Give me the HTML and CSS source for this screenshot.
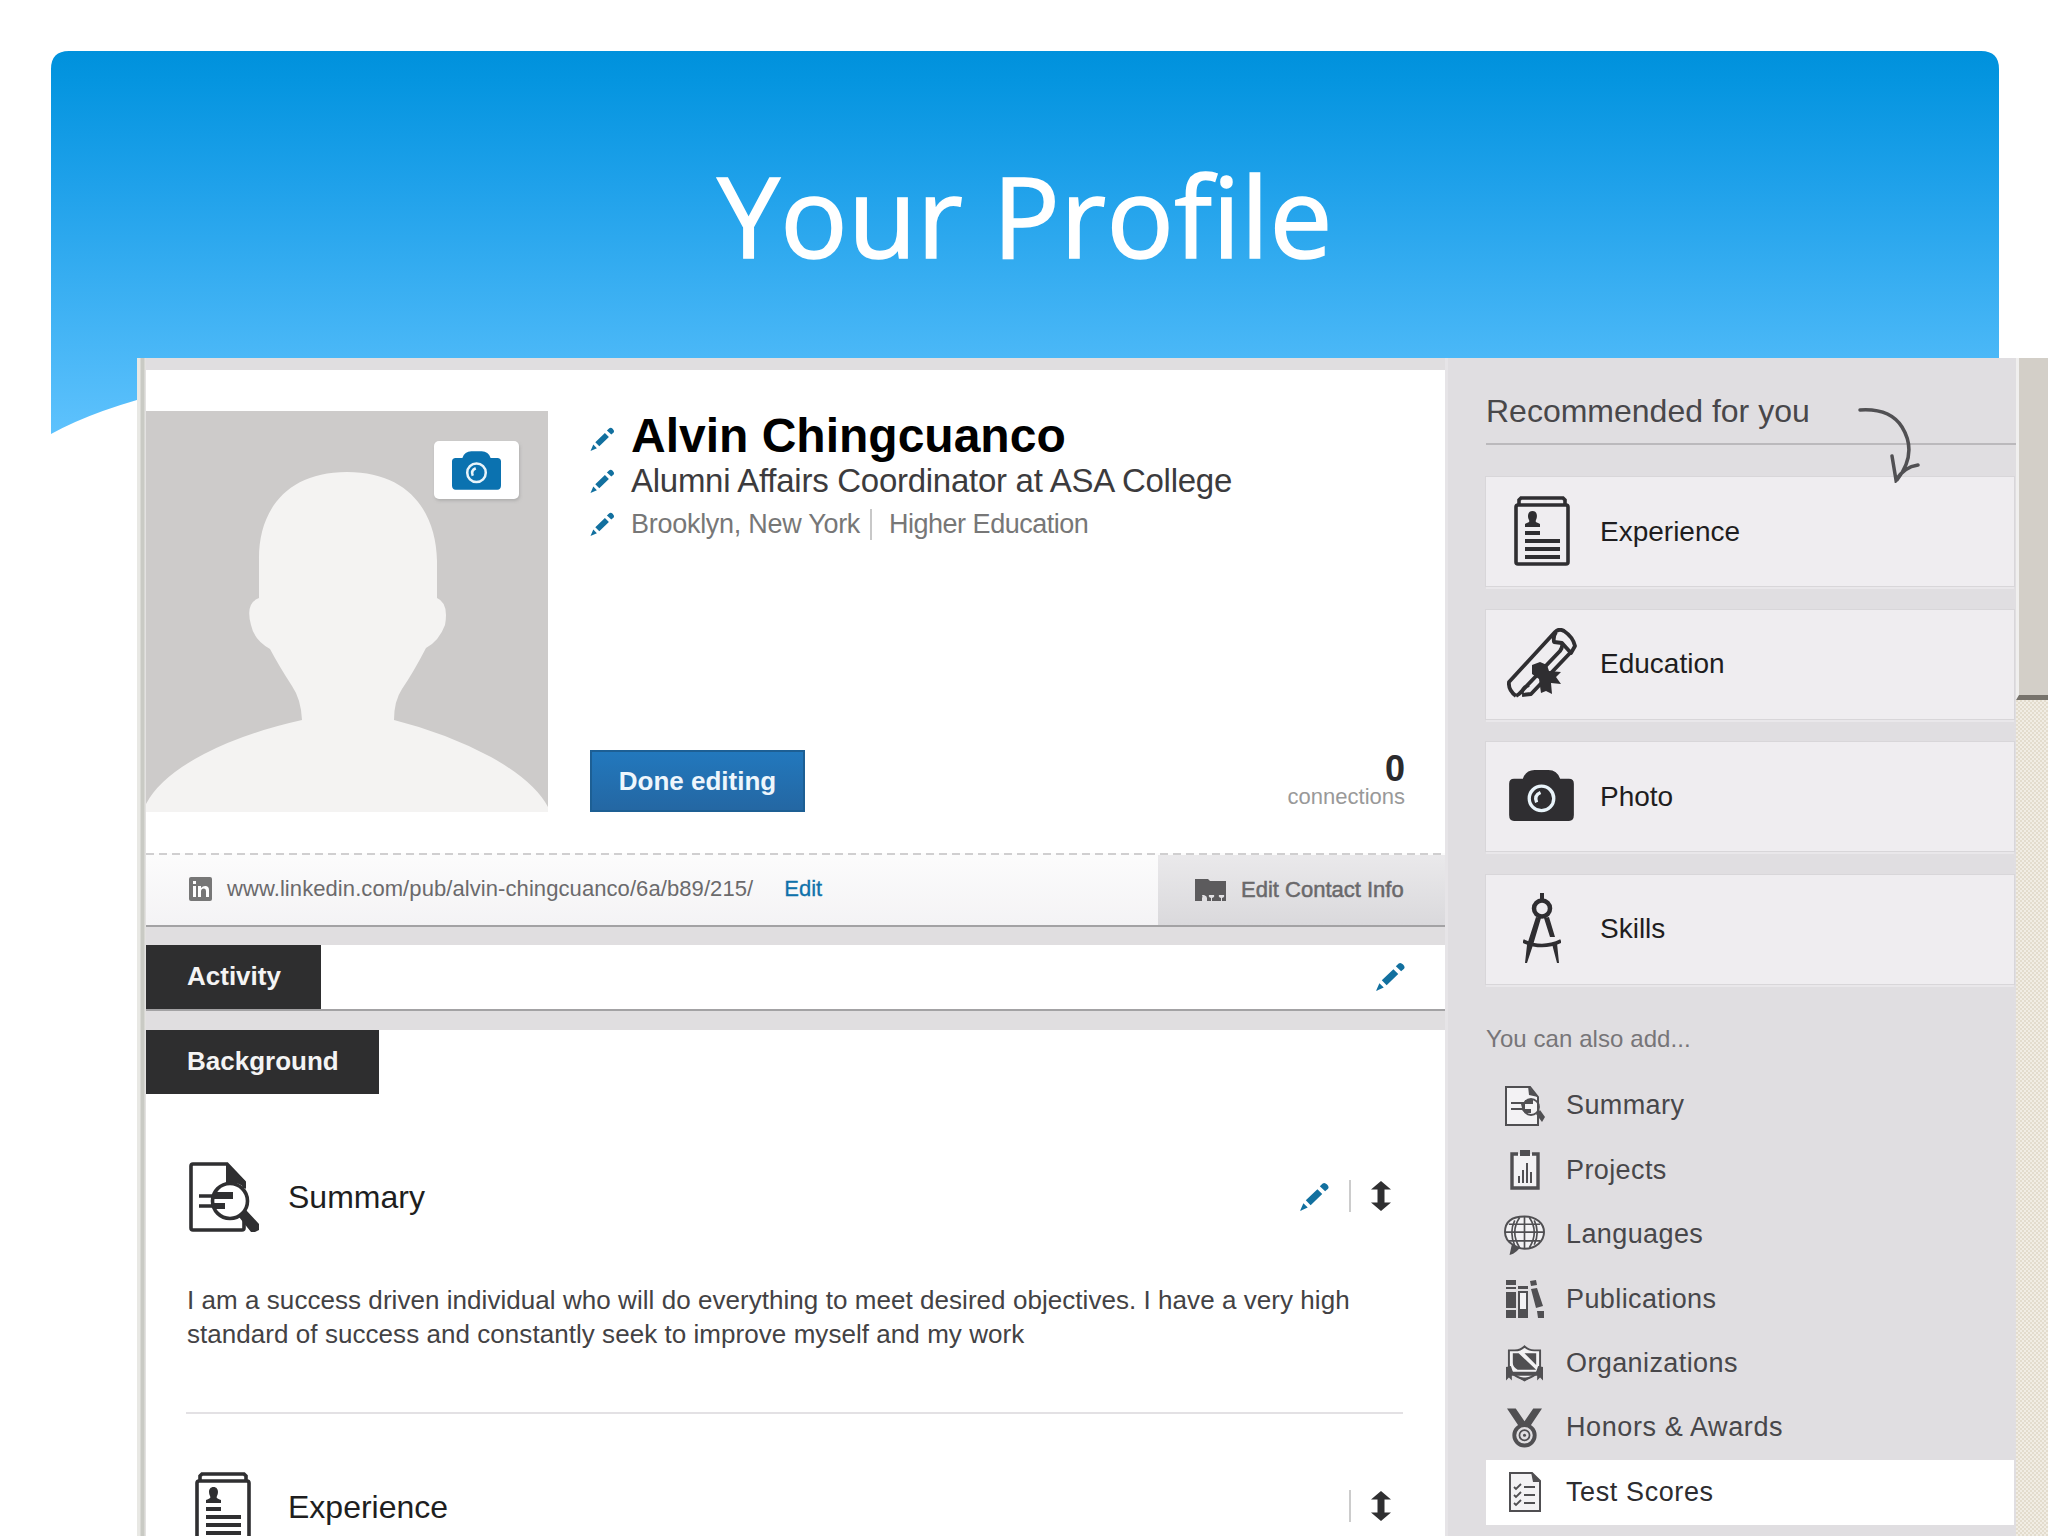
FILE: index.html
```html
<!DOCTYPE html>
<html lang="en">
<head>
<meta charset="utf-8">
<title>Your Profile</title>
<link rel="stylesheet" href="styles.css">
</head>
<body>
<svg class="defs" aria-hidden="true">
  <defs>
    <symbol id="pencil" viewBox="0 0 30 30"><path d="M0 30l3.500-8 4.500 4.500zM6 19L18 7.500l5 5L11 24zM20.500 4.500l3-3q2-1.500 4.500 1t1 4.500l-3 2.500z"/></symbol>
    <symbol id="camera" viewBox="0 0 66 52"><path d="M5 9h9q3-9 12-9h14q9 0 12 9h9q5 0 5 5v32q0 6-5 6H5q-5 0-5-6V14q0-5 5-5z"/><circle class="lens" cx="33" cy="29" r="12.500"/><path class="lens" d="M28 33q-3-7 4-10"/></symbol>
    <symbol id="cv" viewBox="0 0 56 70"><g fill="none" stroke="currentColor" stroke-width="3.600"><path d="M5 8V4l2-2h42l2 2v4"/><rect x="2" y="9" width="52" height="59" rx="2"/></g><path d="M15 24c-2-4-1-9 3.500-9s5.500 5 3.500 9c-1 2 0 2 4 4v3H11v-3c4-2 5-2 4-4zM11 35h15v4H11zM11 43h35v4H11zM11 51h35v4H11zM11 59h35v4H11z"/></symbol>
    <symbol id="summary" viewBox="0 0 70 70"><path fill="none" stroke="currentColor" stroke-width="3.600" d="M55 57v9q0 2-2 2H4q-2 0-2-2V4q0-2 2-2h34l17 18v6"/><path d="M37 1l20 19v7q-8-8-20-6z"/><path fill="none" stroke="currentColor" stroke-width="3.600" d="M10 34h17M10 44h17"/><circle cx="41" cy="39" r="17.500" fill="none" stroke="currentColor" stroke-width="3.600"/><path d="M25 30h19v7H25zM25 41h11v6H25zM50 55l7-7 13 14v6l-4 2h-4z"/></symbol>
    <symbol id="scroll" viewBox="0 0 70 70"><g fill="none" stroke="currentColor" stroke-width="3.800" stroke-linejoin="round"><path d="M9 68Q1 62 2 54L48 4q4-4 9-1 9 6 11 15l-4 7-9-10-8-1q-1-6 2-10"/><path d="M55 15q1 4-2 8L12 66l-3 2M64 24L24 66l-9 1M14 66q2-7 8-9"/></g><path d="M25 37l8-3 7 3 2 6 12 1-5 5 5 7-10-1 1 11-6-3-5 2-2-14-7-5z"/></symbol>
    <symbol id="compass" viewBox="0 0 38 70"><path d="M17 0h4v8h-4z"/><circle cx="19" cy="15.500" r="8" fill="none" stroke="currentColor" stroke-width="4.500"/><path d="M13 24l5 1-8 27-6 18H2l2-18zM21 25l5-1 6 20h-5zM29 51l5-1 2 20h-2z"/><path fill="none" stroke="currentColor" stroke-width="3.600" d="M0 48q19 9 38 0"/></symbol>
    <symbol id="updown" viewBox="0 0 20 30"><path d="M10 0l10 8.500h-6.500v13H20L10 30 0 21.500h6.500v-13H0z"/></symbol>
    <symbol id="s-summary" viewBox="0 0 40 40"><path class="paper" d="M1 1h24l8 10v28H1z"/><path d="M23 0l10 11-9-2zM6 16h14v-2h8v4h-8v5h6v4h-6l-3-3H6v-2h11l-1-4H6z"/><circle cx="26" cy="21" r="8" fill="none" stroke="currentColor" stroke-width="1.800"/><path d="M31 28l4-4 5 7-3 5z"/></symbol>
    <symbol id="s-projects" viewBox="0 0 30 40"><path class="paper thick" d="M8 4H2v34h26V4h-6"/><path d="M10 0h10v6H10zM8 26h2v7H8zM12 20h2v13h-2zM16 13h2v20h-2zM20 22h2v11h-2z"/></symbol>
    <symbol id="s-languages" viewBox="0 0 42 40"><path class="paper" d="M21 1c12 0 20 7 20 16s-8 17-20 17q-4 0-6-1-4 5-8 6l2-9Q1 25 1 17 1 1 21 1z"/><path fill="none" stroke="currentColor" stroke-width="1.700" d="M21 1v33M2 17h38M5 9h32M5 26h32M16 2Q6 17 16 33M26 2q10 15 0 31M11 5Q5 17 11 31M31 5q6 12 0 25"/><path d="M9 29l8 4-10 6z"/></symbol>
    <symbol id="s-publications" viewBox="0 0 38 38"><path d="M0 0h10v5H0zM0 7h10v2H0zM0 12h10v16H0zM0 30h10v8H0zM12 6h10v3H12zM12 31h10v7H12zM24 1l6-1 1 5-6 1zM25 9l6-1 6 18-7 2zM31 31h7v7h-6z"/><path class="paper" d="M13 12h8v18h-8z"/></symbol>
    <symbol id="s-organizations" viewBox="0 0 38 37"><path class="paper" d="M3 5h6q6 0 10-4 4 4 10 4h6v16q-1 10-16 14Q4 31 3 21z"/><path d="M7 8h6l18 17H12Q7 22 7 18zM19 8h12v12zM0 22l5-1 2 6h24l2-6 5 1v14l-3-3-3 3v-5H6v5l-3-3-3 3zM12 33h14l-7 4z"/></symbol>
    <symbol id="s-honors" viewBox="0 0 36 40"><path d="M0 0h9l9 13L27 0h9L24 18H12z"/><circle cx="18" cy="27.500" r="10.500" fill="none" stroke="currentColor" stroke-width="4"/><circle cx="18" cy="27.500" r="5.200" fill="none" stroke="currentColor" stroke-width="1.800"/><circle cx="18" cy="27.500" r="1.600"/></symbol>
    <symbol id="s-scores" viewBox="0 0 32 40"><path class="paper" d="M1 1h22l8 8v30H1z"/><path d="M22 0l10 10h-8z"/><path fill="none" stroke="currentColor" stroke-width="1.800" d="M5 15l2 2 5-5M5 23l2 2 5-5M5 31l2 2 5-5M15 15h11M15 23h11M15 31h11"/></symbol>
  </defs>
</svg>
<div class="slide">
  <header class="banner">
    <svg class="wave" viewBox="0 0 1948 383" preserveAspectRatio="none"><defs><linearGradient id="sky" x1="0" y1="0" x2="0" y2="1"><stop offset="0" stop-color="#0091dc"/><stop offset=".08" stop-color="#0595e0"/><stop offset=".35" stop-color="#1fa1ea"/><stop offset="1" stop-color="#5ec2fd"/></linearGradient></defs><path fill="url(#sky)" d="M18 0H1930Q1948 0 1948 18V340H120Q45 358 0 383V18Q0 0 18 0z"/></svg>
    <h1>Your Profile</h1>
  </header>

  <div class="page">
    <main class="main">
      <section class="card profile">
        <div class="top">
          <div class="avatar">
            <svg viewBox="0 0 402 401"><path fill="#f4f3f2" d="M0 401v-8Q14 366 58 343 98 322 156 309 155 288 146 275 133 255 124 238 108 229 105 214 99 192 113 187V150C112 100 140 61 201 61S290 100 291 150v37Q303 192 299 214 293 230 280 237 267 262 256 278 248 290 248 309 300 322 345 346 388 370 402 396v5z"/></svg>
            <div class="camera"><svg class="cam"><use href="#camera"/></svg></div>
          </div>
          <div class="info">
            <div class="row name"><svg class="pen"><use href="#pencil"/></svg><span>Alvin Chingcuanco</span></div>
            <div class="row headline"><svg class="pen"><use href="#pencil"/></svg><span>Alumni Affairs Coordinator at ASA College</span></div>
            <div class="row place"><svg class="pen"><use href="#pencil"/></svg><span>Brooklyn, New York</span><i class="bar"></i><span class="field">Higher Education</span></div>
            <div class="actions">
              <a class="button">Done editing</a>
              <div class="count"><b>0</b><span>connections</span></div>
            </div>
          </div>
        </div>
        <div class="foot">
          <svg class="in" viewBox="0 0 23 24"><rect width="23" height="24" rx="2" fill="#777"/><path fill="#fff" d="M4 4h3v3H4zM4 9h3v11H4zM9 9h3v2q2-2.500 5-2 3 .5 3 4v7h-3v-6q0-2.500-2-2.500-3 0-3 3V20H9z"/></svg>
          <span class="url">www.linkedin.com/pub/alvin-chingcuanco/6a/b89/215/</span>
          <a class="edit">Edit</a>
          <div class="contact">
            <svg viewBox="0 0 31 22"><path fill="#5c5b5d" d="M0 0h13l2 2h16v20h-4v-3q3-1 2-3h-5q-1 2 2 3v3h-9v-3q3-1 2-3h-5q-1 2 2 3v3h-4v-3q0-2-3-3H7q1 2 0 3v3H0z"/></svg>
            <span>Edit Contact Info</span>
          </div>
        </div>
      </section>

      <section class="card activity">
        <h2>Activity</h2>
        <svg class="pen big"><use href="#pencil"/></svg>
      </section>

      <section class="card background">
        <h2>Background</h2>
        <div class="block">
          <svg class="ico"><use href="#summary"/></svg><h3>Summary</h3>
          <svg class="pen big"><use href="#pencil"/></svg><i class="split"></i><svg class="move"><use href="#updown"/></svg>
        </div>
        <p><span>I am a success driven individual who will do everything to meet desired objectives. I have a very high</span><br><span>standard of success and constantly seek to improve myself and my work</span></p>
        <hr>
        <div class="block second">
          <svg class="ico cv"><use href="#cv"/></svg><h3>Experience</h3>
          <i class="split"></i><svg class="move"><use href="#updown"/></svg>
        </div>
      </section>
    </main>

    <aside class="side">
      <h4>Recommended for you
        <svg class="swoosh" viewBox="0 0 62 76"><path fill="none" stroke="#515053" stroke-width="3.500" stroke-linecap="round" d="M2 3Q32 1 44 20 60 46 39 73M34 49l4 24Q46 60 60 58"/></svg>
      </h4>
      <ul class="cards">
        <li><div><svg width="56" height="70"><use href="#cv"/></svg></div><span>Experience</span></li>
        <li><div><svg width="70" height="70"><use href="#scroll"/></svg></div><span>Education</span></li>
        <li><div><svg class="dark" width="65" height="51"><use href="#camera"/></svg></div><span>Photo</span></li>
        <li><div><svg width="38" height="70"><use href="#compass"/></svg></div><span>Skills</span></li>
      </ul>
      <h5>You can also add...</h5>
      <ul class="more">
        <li><div><svg width="40" height="40"><use href="#s-summary"/></svg></div><span>Summary</span></li>
        <li><div><svg width="30" height="40"><use href="#s-projects"/></svg></div><span>Projects</span></li>
        <li><div><svg width="41" height="40"><use href="#s-languages"/></svg></div><span>Languages</span></li>
        <li><div><svg width="38" height="38"><use href="#s-publications"/></svg></div><span>Publications</span></li>
        <li><div><svg width="37" height="37"><use href="#s-organizations"/></svg></div><span>Organizations</span></li>
        <li><div><svg width="35" height="40"><use href="#s-honors"/></svg></div><span class="wide">Honors &amp; Awards</span></li>
        <li class="on"><div><svg width="32" height="40"><use href="#s-scores"/></svg></div><span class="wide">Test Scores</span></li>
      </ul>
    </aside>
    <div class="edge"><div class="panel"></div></div>
  </div>
</div>
</body>
</html>
```

FILE: styles.css
```css
* { box-sizing: border-box; margin: 0; padding: 0; }
body { width: 2048px; height: 1536px; overflow: hidden; background: #fff; font-family: "Liberation Sans", Arial, sans-serif; color: #333; }
.defs { display: none; }
svg { display: block; fill: currentColor; flex: none; }
span, h3 { white-space: nowrap; }
ul { list-style: none; }

.slide { height: 1536px; overflow: hidden; padding-top: 51px; }
.banner { display: grid; width: 1948px; height: 383px; margin-left: 51px; }
.wave, .banner h1 { grid-area: 1 / 1; }
.wave { width: 1948px; height: 383px; }
.banner h1 { padding-top: 89px; text-align: center; color: #fff; font: 400 112px/150px "Open Sans", sans-serif; letter-spacing: .35px; -webkit-text-stroke: 1.6px #fff; }

.page { position: relative; display: flex; height: 1178px; margin: -76px 0 0 137px; background: #e0dee0; }

.main { width: 1308px; padding: 12px 0 0 9px; background: linear-gradient(90deg, #e8e8e4 0 3px, #c9cac4 4px 7px, #e6e5e2 8px, transparent 9px); }
.card { background: #fff; }
.profile { height: 557px; border-bottom: 2px solid #a3a2a4; }
.top { display: flex; height: 483px; padding: 41px 40px 0 0; }
.avatar { position: relative; width: 402px; height: 401px; background: #cdcbca; }
.camera { position: absolute; left: 288px; top: 30px; display: flex; align-items: center; justify-content: center; width: 85px; height: 58px; background: #fff; border-radius: 5px; box-shadow: 1px 2px 3px #9998; color: #0b72b0; }
.cam { width: 49px; height: 39px; }
.lens { fill: none; stroke: #e9f4fa; stroke-width: 3.4; }
.dark .lens { stroke: #efedf0; }
.info { display: flex; flex: 1; flex-direction: column; height: 401px; margin-left: 42px; }
.row { display: flex; align-items: center; }
.pen { width: 25px; height: 24px; margin-right: 16px; color: #12709f; }
.pen.big { width: 29px; height: 29px; margin: 0 0 2px; }
.name { height: 49px; color: #000; font-size: 48px; font-weight: 700; line-height: 49px; }
.name .pen { margin-top: 6px; }
.headline { height: 41px; color: #3c3b3d; font-size: 33px; line-height: 41px; letter-spacing: -.27px; }
.place { height: 47px; color: #777; font-size: 27px; line-height: 47px; letter-spacing: -.28px; }
.place .pen { margin-bottom: 2px; }
.field { letter-spacing: -.5px; }
.bar { width: 2px; height: 31px; margin: 0 17px 0 10px; background: #c8c8c8; }
.actions { display: flex; justify-content: space-between; align-items: flex-end; flex: 1; }
.button { width: 215px; height: 62px; border: 2px solid #1d5f94; background: linear-gradient(#2278bd, #2467a3); color: #eef6fc; font-size: 26px; font-weight: 700; line-height: 58px; text-align: center; }
.count { display: flex; flex-direction: column; align-items: flex-end; padding-bottom: 2px; color: #999; font-size: 22px; line-height: 26px; }
.count b { color: #2b2b2d; font-size: 36px; line-height: 31px; }
.foot { display: flex; align-items: center; height: 72px; padding-left: 43px; background: repeating-linear-gradient(90deg, #d0cfd0 0 8px, transparent 8px 13px) 0 0 / 100% 2px no-repeat, linear-gradient(#fcfcfc, #f4f3f5); }
.in { width: 23px; height: 24px; margin-right: 15px; }
.url { color: #6b6a6c; font-size: 22px; letter-spacing: .08px; }
.edit { margin-left: 31px; color: #0f72ab; font-size: 22px; -webkit-text-stroke: .3px #0f72ab; }
.contact { display: flex; align-items: center; align-self: flex-end; width: 287px; height: 70px; margin-left: auto; padding-left: 37px; background: linear-gradient(#eae9eb, #dad9dc); color: #6a696b; font-size: 22px; -webkit-text-stroke: .5px #6a696b; }
.contact svg { width: 31px; height: 22px; margin-right: 15px; }

.card h2 { display: inline-block; height: 64px; padding: 0 40.5px 0 41px; background: #2e2e2f; color: #f4f4f4; font-size: 26px; line-height: 63px; }
.activity { display: flex; align-items: center; justify-content: space-between; height: 66px; margin-top: 18px; padding-right: 40px; border-bottom: 2px solid #a3a2a4; }
.background { height: 520px; margin-top: 19px; padding-right: 41px; }
.background h2 { display: block; width: 233px; }
.block { display: flex; align-items: center; height: 70px; margin: 68px 13px 0 43px; color: #2f2f31; }
.ico { width: 70px; height: 70px; }
.block h3 { margin: 0 auto 0 29px; color: #1e1e20; font-size: 32px; font-weight: 400; }
.split { width: 2px; height: 32px; margin: 0 20px 2px; background: #ccc; }
.move { width: 20px; height: 30px; margin-bottom: 2px; }
.block.second { margin-top: 58px; }
.cv { width: 56px; height: 70px; margin: 0 8px 0 6px; }
.background p { height: 68px; margin: 51px 0 0 41px; font-size: 26px; line-height: 34px; letter-spacing: .05px; color: #434244; }
.background hr { height: 2px; margin: 61px 1px 0 40px; border: 0; background: #e3e1e4; }

.side { width: 571px; padding-left: 38px; border-left: 3px solid #e6e4e7; background: #e0dee1; }
.side h4 { position: relative; height: 87px; padding-top: 33px; border-bottom: 2px solid #bbb9bc; color: #48474a; font-size: 32px; font-weight: 400; line-height: 41px; }
.swoosh { position: absolute; left: 372px; top: 49px; width: 62px; height: 76px; }
.cards { display: grid; grid-auto-rows: 109px; gap: 23.6px; margin: 32px 2px 0 0; }
.cards li { display: flex; align-items: center; background: #efedf0; box-shadow: 0 0 0 1px #d8d6d9, 0 3px 0 #e9e7ea; color: #2f2e31; }
.cards div { display: flex; justify-content: center; width: 114px; padding: 0 3px 2px 0; }
.cards span { color: #1e1d20; font-size: 28px; }
.side h5 { margin-top: 39px; color: #777578; font-size: 24px; font-weight: 400; line-height: 32px; letter-spacing: .08px; }
.more { margin-top: 19px; }
.more li { display: flex; align-items: center; height: 64.4px; margin-right: 2px; color: #504f52; }
.more div { display: flex; justify-content: center; width: 80px; padding-right: 3px; }
.more span { font-size: 27px; letter-spacing: .4px; color: #48474a; }
.more .wide { letter-spacing: .6px; }
.more .on { background: #fff; }
.more .on span { color: #2d2c2f; }
.paper { fill: #f3f2f4; stroke: currentColor; stroke-width: 2; }
.thick { stroke-width: 3.4; }

.edge { width: 32px; background: repeating-conic-gradient(#e3dccd 0 25%, #f1ede4 0 50%) 0 0 / 4px 4px; }
.panel { height: 342px; border-left: 3px solid #f0efee; border-bottom: 5px solid #77736c; background: #d3cfc8; }
```
